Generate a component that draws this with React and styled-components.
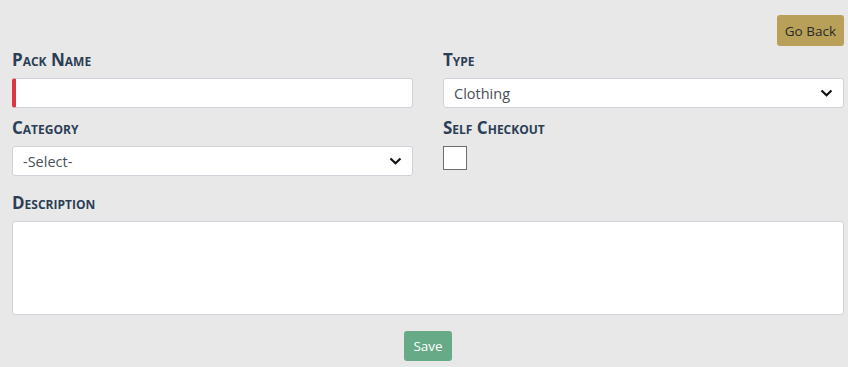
import React from "react";
import styled, {createGlobalStyle} from "styled-components";

const GlobalStyle = createGlobalStyle`
  html, body {
    margin: 0;
    padding: 0;
    background: #e8e8e8;
  }
  body {
    font-family: "Open Sans", "Liberation Sans", sans-serif;
  }
  * {
    box-sizing: border-box;
  }
`;

const Page = styled.div`
  width: 848px;
  height: 367px;
  padding: 15px 4px 0 12px;
  overflow: hidden;
`;

const TopBar = styled.div`
  display: flex;
  justify-content: flex-end;
`;

const Button = styled.button`
  height: ${props => props.$height || 30}px;
  padding: 0 ${props => props.$padX || 8}px;
  border: none;
  border-radius: 3px;
  background: ${props => props.$bg};
  color: ${props => props.$color};
  font-family: "Open Sans", "Liberation Sans", sans-serif;
  font-size: 13.5px;
  cursor: pointer;
`;

const FormGrid = styled.div`
  display: grid;
  grid-template-columns: 401px 401px;
  column-gap: 30px;
  row-gap: 10px;
  margin-top: 4px;
`;

const Field = styled.div`
  display: flex;
  flex-direction: column;
  grid-column: ${props => props.$full ? "1 / -1" : "auto"};
  margin-top: ${props => props.$gapTop || 0}px;
`;

const Label = styled.label`
  height: 20px;
  line-height: 20px;
  margin-bottom: 8px;
  font-size: 17px;
  font-weight: 700;
  font-variant: small-caps;
  color: #2c3e55;
`;

const TextInput = styled.input`
  height: 30px;
  width: 100%;
  padding: 0 10px;
  background: #fff;
  border: 1px solid #ced4da;
  border-left: ${props => props.$invalid ? "4px solid #dc3545" : "1px solid #ced4da"};
  border-radius: 3px;
  font-family: inherit;
  font-size: 14px;
  color: #495057;
  outline: none;
`;

const SelectBox = styled.div`
  height: 30px;
  display: flex;
  align-items: center;
  justify-content: space-between;
  padding: 0 10px 0 10px;
  background: #fff;
  border: 1px solid #ced4da;
  border-radius: 3px;
  font-size: 14.5px;
  color: #495057;
`;

const CheckBox = styled.div`
  width: 24px;
  height: 24px;
  background: #fff;
  border: 1px solid #6e6e6e;
`;

const TextArea = styled.textarea`
  height: 94px;
  width: 100%;
  background: #fff;
  border: 1px solid #ced4da;
  border-radius: 3px;
  resize: none;
  outline: none;
  font-family: inherit;
`;

const Footer = styled.div`
  display: flex;
  justify-content: center;
  margin-top: 16px;
`;

const Chevron = () => (
    <svg width="13" height="8" viewBox="0 0 13 8">
        <path d="M1.5 1.5 L6.5 6.2 L11.5 1.5" fill="none" stroke="#111" strokeWidth="2.2"/>
    </svg>
);

function Select({value}) {
    return (
        <SelectBox>
            <span>{value}</span>
            <Chevron/>
        </SelectBox>
    );
}

function App() {
    return (
        <Page>
            <GlobalStyle/>
            <TopBar>
                <Button $bg="#b9a058" $color="#2a2a2a" $height={31} $padX={8}>Go Back</Button>
            </TopBar>

            <FormGrid>
                <Field>
                    <Label>Pack Name</Label>
                    <TextInput $invalid/>
                </Field>
                <Field>
                    <Label>Type</Label>
                    <Select value="Clothing"/>
                </Field>
                <Field>
                    <Label>Category</Label>
                    <Select value="-Select-"/>
                </Field>
                <Field>
                    <Label>Self Checkout</Label>
                    <CheckBox/>
                </Field>
                <Field $full $gapTop={7}>
                    <Label>Description</Label>
                    <TextArea/>
                </Field>
            </FormGrid>

            <Footer>
                <Button $bg="#66aa88" $color="#fff" $padX={9}>Save</Button>
            </Footer>
        </Page>
    );
}

export default App;
